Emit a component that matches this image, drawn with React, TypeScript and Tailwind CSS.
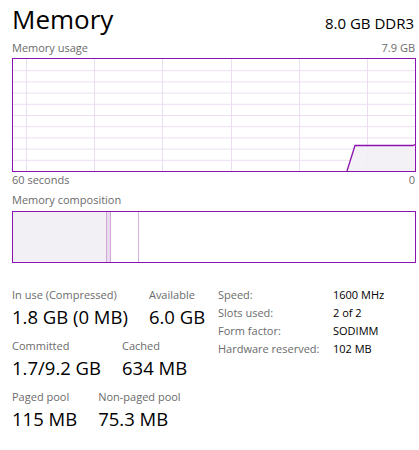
import React from "react";

const font = { fontFamily: '"Open Sans", "Noto Sans", sans-serif' };

function UsageChart() {
  const h = [1, 2, 3, 4, 5, 6, 7, 8, 9].map((k) => +(k * 11.2).toFixed(1));
  const v = [13, 81, 149, 218, 286, 354];
  return (
    <svg width="402" height="112" viewBox="0 0 402 112" className="block">
      {h.map((y) => (
        <line key={"h" + y} x1="0" x2="402" y1={y + 0.5} y2={y + 0.5} stroke="#ecdef0" strokeWidth="1" />
      ))}
      {v.map((x) => (
        <line key={"v" + x} x1={x + 0.5} x2={x + 0.5} y1="0" y2="112" stroke="#ecdef0" strokeWidth="1" />
      ))}
      <polygon points="334,112 342,86.5 400,86.5 402,85.5 402,112" fill="#f3f0f5" fillOpacity="0.9" />
      <polyline points="334,112 342,86.5 400,86.5 402,85.5" fill="none" stroke="#8b12ae" strokeWidth="1.3" />
    </svg>
  );
}

function Stat({ label, value }: { label: string; value: string }) {
  return (
    <div className="flex flex-col">
      <div className="text-[11px] leading-[15px] text-[#6b6b6b] whitespace-nowrap">{label}</div>
      <div className="mt-[2px] text-[18.5px] leading-[26px] text-black whitespace-nowrap">{value}</div>
    </div>
  );
}

export default function App() {
  const rows: [string, string][] = [
    ["Speed:", "1600 MHz"],
    ["Slots used:", "2 of 2"],
    ["Form factor:", "SODIMM"],
    ["Hardware reserved:", "102 MB"],
  ];
  return (
    <div className="w-[419px] h-[450px] bg-white overflow-hidden" style={font}>
      <div className="flex justify-between items-baseline pl-[12px] pr-[5px] pt-[1px] h-[40px]">
        <span className="text-[26px] leading-[36px] font-normal text-black">Memory</span>
        <span className="text-[15px] text-black">8.0 GB DDR3</span>
      </div>
      <div className="flex justify-between pl-[12px] pr-[4px] h-[15px] mb-[3px] text-[11px] leading-[15px] text-[#6b6b6b]">
        <span>Memory usage</span>
        <span>7.9 GB</span>
      </div>
      <div className="ml-[12px] mr-[3px] h-[114px] border border-[#8b12ae]">
        <UsageChart />
      </div>
      <div className="flex justify-between pl-[12px] pr-[4px] h-[15px] text-[11px] leading-[15px] text-[#6b6b6b]">
        <span>60 seconds</span>
        <span>0</span>
      </div>
      <div className="pl-[12px] mt-[5px] h-[15px] text-[11px] leading-[15px] text-[#6b6b6b]">Memory composition</div>
      <div className="ml-[12px] mr-[3px] mt-[4px] h-[52px] border border-[#8b12ae] flex">
        <div className="w-[94px] h-full bg-[#f3f0f5] border-r border-[#cfa8d8]" />
        <div className="w-[4px] h-full bg-[#e9dbed] border-r border-[#cfa8d8]" />
        <div className="w-[28px] h-full border-r border-[#d6b2dd]" />
        <div className="flex-1" />
      </div>
      <div className="flex items-start pl-[12px] mt-[23px]">
        <div className="w-[206px] pt-[1px] flex flex-col gap-[8px]">
          <div className="flex gap-[21px]">
            <Stat label="In use (Compressed)" value="1.8 GB (0 MB)" />
            <Stat label="Available" value="6.0 GB" />
          </div>
          <div className="flex gap-[21px]">
            <Stat label="Committed" value="1.7/9.2 GB" />
            <Stat label="Cached" value="634 MB" />
          </div>
          <div className="flex gap-[21px]">
            <Stat label="Paged pool" value="115 MB" />
            <Stat label="Non-paged pool" value="75.3 MB" />
          </div>
        </div>
        <div className="grid grid-cols-[115px_auto] content-start text-[11px] leading-[18px]">
          {rows.map(([k, val]) => (
            <React.Fragment key={k}>
              <div className="text-[#6b6b6b] whitespace-nowrap">{k}</div>
              <div className="text-black whitespace-nowrap">{val}</div>
            </React.Fragment>
          ))}
        </div>
      </div>
    </div>
  );
}
